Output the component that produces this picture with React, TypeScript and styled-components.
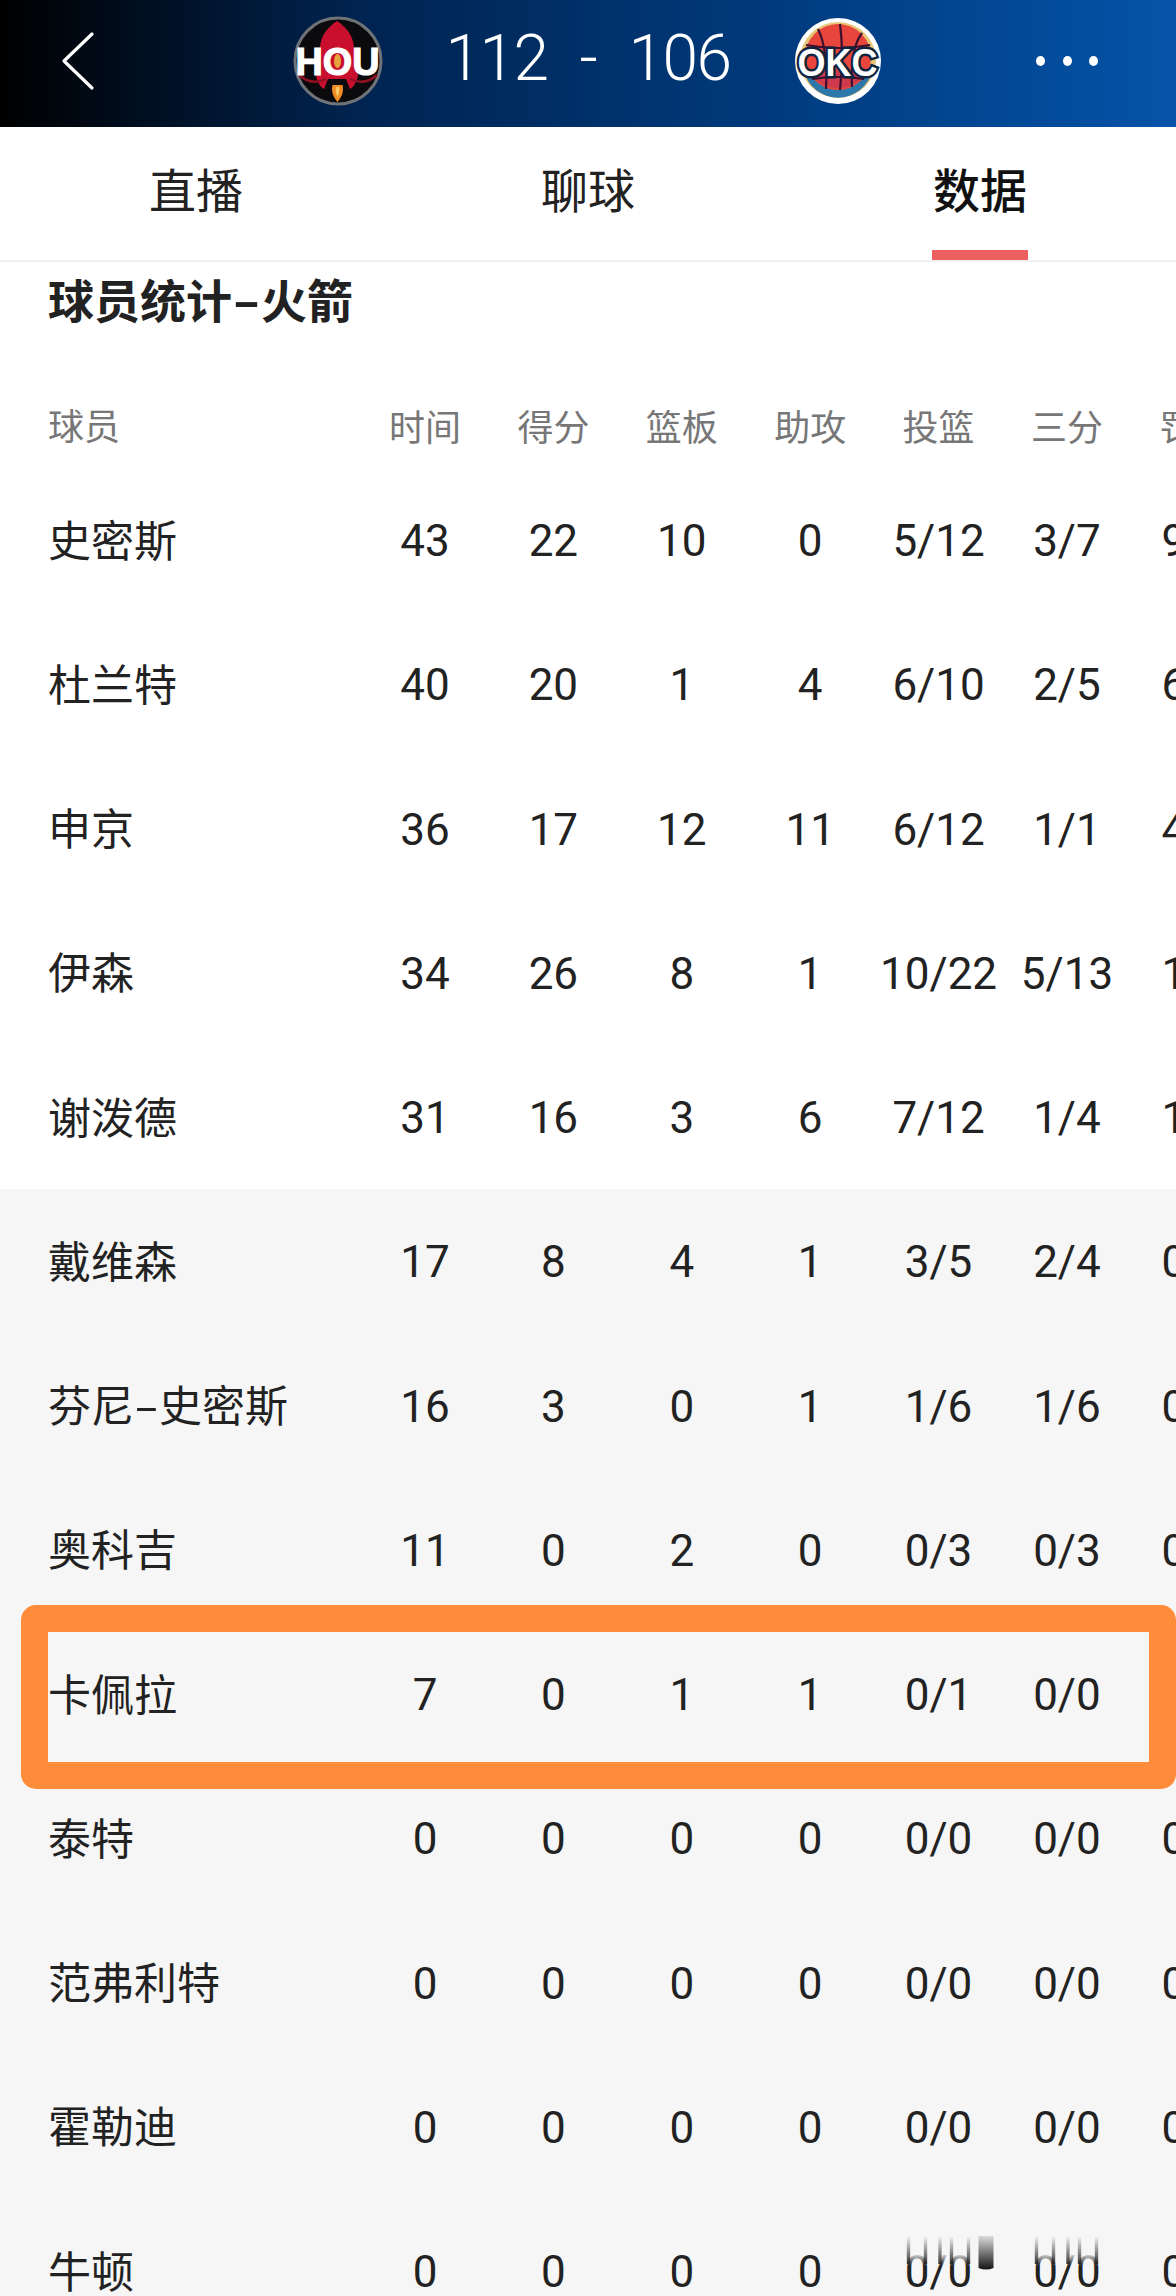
import React from "react";
import styled, { createGlobalStyle } from "styled-components";

const Global = createGlobalStyle`
  html, body { margin: 0; padding: 0; overflow: hidden; background: #fff; }
  #root { width: 1176px; height: 2296px; overflow: hidden; }
`;
const Page = styled.div`
  width: 1176px; height: 2296px; overflow: hidden; background: #fff; position: relative;
  font-family: "Noto Sans CJK SC", sans-serif; color: #222;
`;
const Header = styled.header`
  height: 127px; box-sizing: border-box; padding-bottom: 5px; display: flex; align-items: center;
  background: linear-gradient(90deg, #000 0%, #00234f 30%, #003a7c 65%, #0553a8 100%);
`;
const Back = styled.svg`width: 40px; height: 60px; margin-left: 58px; flex: none;`;
const Match = styled.div`display: flex; align-items: center; margin-left: 192px; width: 596px; flex: none;`;
const Score = styled.div`
  flex: 1; display: flex; justify-content: center; gap: 32px; color: #fff; padding-bottom: 4px;
  font: 300 64px/1 Roboto, sans-serif; letter-spacing: -1.5px;
`;
const Logo = styled.svg`width: 96px; height: 96px; flex: none; overflow: visible;`;
const More = styled.div`display: flex; gap: 17.5px; margin-left: 150px;`;
const Dot = styled.i`width: 9px; height: 10px; border-radius: 50%; background: #fff; display: block;`;
const Tabs = styled.nav`
  height: 133px; display: grid; grid-template-columns: repeat(3, 1fr);
  border-bottom: 2px solid #f0f0f0;
`;
const Tab = styled.div<{ $active?: boolean }>`
  position: relative; display: flex; justify-content: center; padding-top: 29px;
  font-size: 47px; line-height: 64px; font-weight: ${p => (p.$active ? 500 : 400)}; color: ${p => (p.$active ? "#111" : "#222")};
  &::after {
    content: ""; display: ${p => (p.$active ? "block" : "none")};
    position: absolute; bottom: 0; left: 50%; transform: translateX(-50%);
    width: 96px; height: 10px; background: #ee5f5f;
  }
`;
const Title = styled.h2`
  margin: 0; padding: 5px 48px 0; height: 122px; box-sizing: border-box;
  font-size: 46px; line-height: 62px; font-weight: 700; color: #222;
`;
const Hyphen = styled.span<{ $pad: number }>`
  display: inline-block; padding: 0 ${p => p.$pad}px; transform: scaleX(1.7);
`;
const Row = styled.div<{ $grey?: boolean }>`
  height: 144.25px; display: flex; align-items: center; position: relative; padding-left: 48px;
  background: ${p => (p.$grey ? "#f6f6f6" : "#fff")};
`;
const HeadRow = styled(Row)`height: 84px;`;
const Name = styled.div`width: 312.8px; flex: none; font-size: 43px; white-space: nowrap; padding-bottom: 5px; box-sizing: border-box;`;
const Cell = styled.div`
  width: 128.4px; flex: none; text-align: center; white-space: nowrap; padding-top: 2px;
  font: 380 44px/1 Roboto, "Noto Sans CJK SC", sans-serif; position: relative;
`;
const HeadName = styled(Name)`font-size: 36px; color: #777;`;
const HeadCell = styled(Cell)`font: 400 36px/1 "Noto Sans CJK SC", sans-serif; color: #777; padding-top: 0; padding-bottom: 3px;`;
const Frame = styled.div`
  position: absolute; left: 21px; right: 0; top: -17px; bottom: -23px; box-sizing: border-box;
  border: 27px solid #ff8c3a; border-radius: 15px; pointer-events: none; z-index: 2;
`;
const Ghost = styled.svg`position: absolute; left: 50%; top: -12px; width: 130px; height: 40px; margin-left: -65px;`;

const heads = ["时间", "得分", "篮板", "助攻", "投篮", "三分", "罚球"];
const rows: [string, ...string[]][] = [
  ["史密斯", "43", "22", "10", "0", "5/12", "3/7", "9/9"],
  ["杜兰特", "40", "20", "1", "4", "6/10", "2/5", "6/6"],
  ["申京", "36", "17", "12", "11", "6/12", "1/1", "4/4"],
  ["伊森", "34", "26", "8", "1", "10/22", "5/13", "1/2"],
  ["谢泼德", "31", "16", "3", "6", "7/12", "1/4", "1/1"],
  ["戴维森", "17", "8", "4", "1", "3/5", "2/4", "0/0"],
  ["芬尼-史密斯", "16", "3", "0", "1", "1/6", "1/6", "0/0"],
  ["奥科吉", "11", "0", "2", "0", "0/3", "0/3", "0/0"],
  ["卡佩拉", "7", "0", "1", "1", "0/1", "0/0", "0/0"],
  ["泰特", "0", "0", "0", "0", "0/0", "0/0", "0/0"],
  ["范弗利特", "0", "0", "0", "0", "0/0", "0/0", "0/0"],
  ["霍勒迪", "0", "0", "0", "0", "0/0", "0/0", "0/0"],
  ["牛顿", "0", "0", "0", "0", "0/0", "0/0", "0/0"],
];

const HouLogo = () => (
  <Logo viewBox="0 0 96 96">
    <circle cx="48" cy="48" r="43" fill="#0b0b0d" stroke="#6f7378" strokeWidth="3" />
    <path d="M47 8 C56 14 63 22 64 34 L68 58 C69 66 64 74 60 76 L56 66 L38 66 L34 76 C30 74 25 66 26 58 L30 34 C31 22 38 14 47 8Z" fill="#c8102e" />
    <path d="M9 62 C18 70 28 70 36 66 M87 62 C78 70 68 70 60 66" stroke="#8f1022" strokeWidth="2.5" fill="none" />
    <path d="M47.5 89 C43 84 41 78 42.5 72 L52.5 72 C54 78 52 84 47.5 89Z" fill="#f08a24" />
    <path d="M47.5 84 C45.5 80 45.5 77 46 74 L49 74 C49.5 77 49.5 80 47.5 84Z" fill="#f7c766" />
    <text x="47.5" y="62" textAnchor="middle" fontFamily="Liberation Sans, sans-serif" fontWeight="700" fontSize="38" fill="#fff" stroke="#fff" strokeWidth="1.2" textLength="84" lengthAdjust="spacingAndGlyphs">HOU</text>
    <ellipse cx="47.5" cy="48" rx="3.5" ry="7" fill="#e8a43c" />
  </Logo>
);
const OkcLogo = () => (
  <Logo viewBox="0 0 96 96">
    <circle cx="48" cy="48" r="43" fill="#fff" />
    <circle cx="48" cy="47" r="38" fill="#e8c576" />
    <path d="M14 58 A35 35 0 0 0 82 58 Z" fill="#2c78ab" />
    <circle cx="48" cy="44" r="33" fill="#e8453c" />
    <path d="M19 58 L77 58 A33 33 0 0 1 19 58Z" fill="#cf3a4c" />
    <path d="M28 16 Q38 36 36 76 M50 11 Q54 40 50 77 M72 20 Q60 36 62 74 M16 32 Q48 38 80 32 M22 66 Q48 62 74 66" stroke="#3a1030" strokeWidth="2.2" fill="none" />
    <text x="47.5" y="63" textAnchor="middle" fontFamily="Liberation Sans, sans-serif" fontWeight="700" fontSize="39" fill="#fff" stroke="#10233f" strokeWidth="5" paintOrder="stroke" textLength="80" lengthAdjust="spacingAndGlyphs">OKC</text>
  </Logo>
);

const BlurOverlay = ({ bar, id }: { bar?: boolean; id: string }) => (
  <Ghost viewBox="0 0 130 40">
    <defs>
      <linearGradient id={`${id}c`} gradientUnits="userSpaceOnUse" x1="0" y1="16" x2="0" y2="30">
        <stop offset="0" stopColor="#f6f6f6" stopOpacity="1" />
        <stop offset="1" stopColor="#f6f6f6" stopOpacity="0" />
      </linearGradient>
      <linearGradient id={`${id}l`} gradientUnits="userSpaceOnUse" x1="0" y1="0" x2="0" y2="28">
        <stop offset="0" stopColor="#222" stopOpacity="0" />
        <stop offset="1" stopColor="#222" stopOpacity="0.9" />
      </linearGradient>
      <linearGradient id={`${id}b`} gradientUnits="userSpaceOnUse" x1="0" y1="0" x2="0" y2="34">
        <stop offset="0" stopColor="#111" stopOpacity="0.12" />
        <stop offset="1" stopColor="#111" stopOpacity="1" />
      </linearGradient>
    </defs>
    <rect x="30" y="0" width="70" height="30" fill={`url(#${id}c)`} />
    {[34.5, 51.5, 66, 77.5, 94.5].map(x => (
      <line key={x} x1={x} x2={x} y1="0" y2="28" stroke={`url(#${id}l)`} strokeWidth="3.4" />
    ))}
    {bar && <path d="M104.5 0 H119.5 V32 Q112 35 104.5 32Z" fill={`url(#${id}b)`} />}
  </Ghost>
);

export default function App() {
  return (
    <Page>
      <Global />
      <Header>
        <Back viewBox="0 0 40 60">
          <path d="M34 3 L6 30 L34 57" fill="none" stroke="#fff" strokeWidth="3.2" strokeLinecap="round" strokeLinejoin="round" />
        </Back>
        <Match>
          <HouLogo />
          <Score><span>112</span><span>-</span><span>106</span></Score>
          <OkcLogo />
        </Match>
        <More><Dot /><Dot /><Dot /></More>
      </Header>
      <Tabs>
        <Tab>直播</Tab>
        <Tab>聊球</Tab>
        <Tab $active>数据</Tab>
      </Tabs>
      <Title>球员统计<Hyphen $pad={6}>-</Hyphen>火箭</Title>
      <section>
        <HeadRow>
          <HeadName>球员</HeadName>
          {heads.map(h => <HeadCell key={h}>{h}</HeadCell>)}
        </HeadRow>
        {rows.map(([name, ...vals], i) => (
          <Row key={name} $grey={i >= 5}>
            <Name>
              {name.includes("-") ? <>{name.split("-")[0]}<Hyphen $pad={5}>-</Hyphen>{name.split("-")[1]}</> : name}
            </Name>
            {vals.map((v, j) => (
              <Cell key={j}>
                {v}
                {i === 12 && j === 4 && <BlurOverlay id="g1" bar />}
                {i === 12 && j === 5 && <BlurOverlay id="g2" />}
              </Cell>
            ))}
            {name === "卡佩拉" && <Frame />}
          </Row>
        ))}
      </section>
    </Page>
  );
}
